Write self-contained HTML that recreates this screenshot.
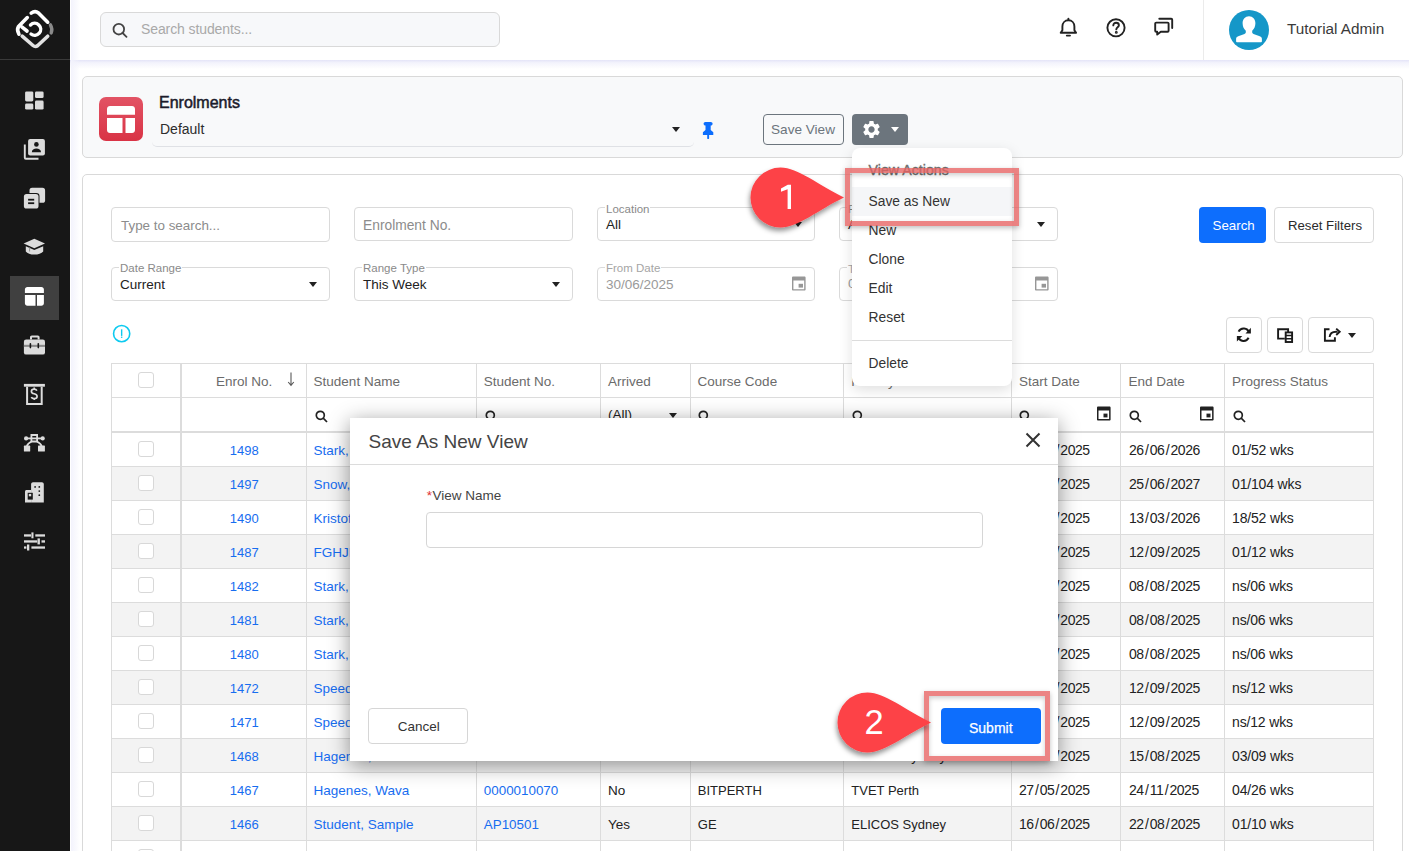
<!DOCTYPE html>
<html><head><meta charset="utf-8">
<style>
*{box-sizing:border-box;margin:0;padding:0}
html,body{width:1409px;height:851px;overflow:hidden;background:#fff;font-family:"Liberation Sans",sans-serif;color:#222}
.a{position:absolute}
.t{position:absolute;white-space:nowrap;line-height:1}
#side{left:0;top:0;width:70px;height:851px;background:#171717}
.ico{position:absolute;fill:#d9d9d9}
#top{left:70px;top:0;width:1339px;height:60px;background:#fff}
.inp{position:absolute;border:1px solid #dadada;border-radius:4px;background:#fff}
.lbl{position:absolute;font-size:11.5px;color:#8a8a8a;background:#fff;padding:0 1px;line-height:12px}
.caret{position:absolute;width:0;height:0;border-left:4px solid transparent;border-right:4px solid transparent;border-top:5px solid #222}
.btn{position:absolute;border-radius:4px;text-align:center;white-space:nowrap}
.hl{position:absolute;background:#dcdcdc}
.cb{position:absolute;width:16px;height:16px;border:1.5px solid #d8d8d8;border-radius:3px;background:#fff}
.cell{position:absolute;white-space:nowrap;font-size:13.5px;line-height:1}
</style></head><body>

<!-- SIDEBAR -->
<div id="side" class="a">
  <svg class="a" style="left:0;top:0" width="70" height="60" viewBox="0 0 70 60" fill="none" stroke-linecap="round" stroke-linejoin="round">
    <path d="M31.2 13.2 Q35 10.2 38.5 13 L47.7 22.2" stroke="#fff" stroke-width="3.6"/>
    <path d="M27.3 17.6 L18.5 26.5 Q16.5 30 18.9 34.1" stroke="#fff" stroke-width="3.6"/>
    <path d="M21.8 26.8 L27 31" stroke="#fff" stroke-width="3.6"/>
    <path d="M30.5 25 A6 6 0 1 1 31 34" stroke="#fff" stroke-width="3.4"/>
    <path d="M22.2 36.2 L33 45.5 Q35.4 47.5 37.8 45.5 L47.7 36.2" stroke="#e2e2e2" stroke-width="3.6"/>
    <path d="M50.4 24.9 Q52.8 29 51.2 32.9" stroke="#8a8a8a" stroke-width="3.4"/>
  </svg>
  <div class="a" style="left:0;top:59px;width:70px;height:1px;background:#3a3a3a"></div>
  <div class="a" style="left:10px;top:276px;width:49px;height:44px;background:#404040"></div>
  <!-- dashboard -->
  <svg class="a" style="left:0;top:80px" width="70" height="100" viewBox="0 80 70 100" fill="#dcdcdc"><rect x="25.1" y="91.4" width="8.2" height="10" rx="1.4"/><rect x="35" y="91.4" width="8.6" height="6.7" rx="1.4"/><rect x="25.1" y="103.5" width="8.2" height="6.1" rx="1.4"/><rect x="35" y="100.5" width="8.6" height="9.1" rx="1.4"/>
  <rect x="28.1" y="139" width="16.8" height="16.4" rx="2"/><path d="M24.8 144.6v13.2c0 .6.4 1 1 1h12.7" fill="none" stroke="#dcdcdc" stroke-width="1.9"/>
  <circle cx="36.4" cy="144.4" r="2.3" fill="#171717"/><path d="M31.8 152.2c0-2.3 2.2-3.6 4.6-3.6s4.6 1.3 4.6 3.6z" fill="#171717"/></svg>
  <!-- copy lines -->
  <svg class="a" style="left:0;top:180px" width="70" height="90" viewBox="0 180 70 90" fill="#dcdcdc">
  <rect x="29.5" y="187.8" width="15.6" height="15" rx="2.6"/>
  <rect x="22.9" y="192.9" width="16.6" height="16.7" rx="3.2" fill="#171717"/>
  <rect x="23.9" y="193.9" width="14.6" height="14.7" rx="2.6"/>
  <rect x="28.1" y="198.8" width="6.1" height="1.8" fill="#171717"/><rect x="28.1" y="202.3" width="6.1" height="1.8" fill="#171717"/>
  <path d="M34.3 238.8L45 243.5 34.3 248.2 23.6 243.5z"/>
  <path d="M25.8 246.2l8.5 3.8 8.9-3.8v5.2c-1.6 2-5 3.2-8.9 3.2s-7-1.2-8.5-3.2z"/>
  <rect x="29" y="247.5" width="1.1" height="4" fill="#9a9a9a"/>
  </svg>
  <!-- web layout (active) -->
  <svg class="a" style="left:0;top:280px" width="70" height="280" viewBox="0 280 70 280">
  <path fill="#fff" d="M27.4 287h14c1.4 0 2.5 1.1 2.5 2.5v3.6H24.9v-3.6c0-1.4 1.1-2.5 2.5-2.5zM24.9 295h10.6v10.8h-8.1c-1.4 0-2.5-1.1-2.5-2.5zM37 295h6.9v8.3c0 1.4-1.1 2.5-2.5 2.5H37z"/>
  <g fill="#dcdcdc">
  <path d="M30 339.6v-2.4c0-1 .8-1.8 1.8-1.8h6c1 0 1.8.8 1.8 1.8v2.4h-2v-2.2h-5.6v2.2z"/>
  <rect x="23.9" y="339.6" width="21.1" height="15" rx="2.2"/>
  </g>
  <rect x="23.9" y="344.8" width="21.1" height="2.1" fill="#8a8a8a"/>
  <rect x="29.6" y="342.9" width="1.6" height="5.5" rx=".8" fill="#171717"/><rect x="37.5" y="342.9" width="1.6" height="5.5" rx=".8" fill="#171717"/>
  <g fill="#dcdcdc">
  <rect x="23.9" y="383.9" width="21" height="2.8"/>
  <path d="M26.1 386.7h16.6v18.2H26.1zM28.1 386.7v16.2h12.6v-16.2z" fill-rule="evenodd"/>
  </g>
  <path d="M36.9 390.6c-.5-.9-1.5-1.5-2.7-1.5-1.6 0-2.8.9-2.8 2.3 0 1.5 1.3 2 2.8 2.4 1.6.4 2.9.9 2.9 2.5 0 1.4-1.3 2.4-2.9 2.4-1.3 0-2.4-.6-2.9-1.6M34.2 387.6v1.5M34.2 398.2v1.8" fill="none" stroke="#dcdcdc" stroke-width="1.7"/>
  <g fill="#dcdcdc">
  <path d="M30.5 434h7.5v8.6h-7.5zM32.3 436v4.6h3.9V436z" fill-rule="evenodd"/>
  <circle cx="26.1" cy="438.4" r="2.1"/><circle cx="42.7" cy="438.4" r="2.1"/>
  <rect x="26.1" y="437.5" width="16.6" height="1.8"/>
  <rect x="23.9" y="445.6" width="6.3" height="6" rx=".6"/><rect x="38" y="445.6" width="6.9" height="6" rx=".6"/>
  </g>
  <path d="M31.5 441.5c-2.6 1.3-4.2 2.8-4.6 4.6M37 441.5c2.6 1.3 4.2 2.8 4.6 4.6" fill="none" stroke="#dcdcdc" stroke-width="1.8"/>
  <g fill="#dcdcdc">
  <path d="M33 482.2h8.9c1 0 1.9.9 1.9 1.9v18.5H31.1V484.1c0-1 .9-1.9 1.9-1.9z"/>
  <path d="M26.5 490.1h4.6v12.5H25V491.6c0-.8.7-1.5 1.5-1.5z"/>
  </g>
  <rect x="27.7" y="492.8" width="5.1" height="6.8" fill="#171717"/><rect x="28.8" y="493.9" width="2.4" height="2.4" fill="#dcdcdc"/>
  <g fill="#171717"><circle cx="35.1" cy="486.9" r=".9"/><circle cx="39.3" cy="486.9" r=".9"/><circle cx="39.3" cy="491.1" r=".9"/><circle cx="39.3" cy="495.2" r=".9"/></g>
  <g fill="#dcdcdc">
  <rect x="24" y="534.3" width="7" height="2.3"/><rect x="31.4" y="532.4" width="2.1" height="5.9"/><rect x="35.3" y="534.3" width="9.7" height="2.3"/>
  <rect x="24" y="540.3" width="13.2" height="2.3"/><rect x="37.5" y="538.4" width="2.4" height="6"/><rect x="41.5" y="540.3" width="3.5" height="2.3"/>
  <rect x="24" y="546.4" width="2.4" height="2.3"/><rect x="27" y="544.5" width="2.3" height="6"/><rect x="31.4" y="546.4" width="13.6" height="2.3"/>
  </g>
  </svg>
</div>

<!-- TOPBAR -->
<div id="top" class="a"></div>
<div class="a" style="left:70px;top:60px;width:1339px;height:9px;background:linear-gradient(#e4e4f8,#f3f3fc 30%,rgba(255,255,255,0))"></div>
<div class="a" style="left:71px;top:0;width:9px;height:851px;background:linear-gradient(90deg,#f3f3fc,rgba(255,255,255,0))"></div>
<div class="a" style="left:100px;top:12px;width:400px;height:35px;background:#f7f8fa;border:1px solid #d9d9d9;border-radius:6px"></div>
<svg class="a" style="left:112px;top:22px" width="16" height="16" viewBox="0 0 16 16" fill="none" stroke="#444" stroke-width="1.8"><circle cx="6.8" cy="7.2" r="5.3"/><path d="M10.6 11 L14.5 14.8" stroke-linecap="round"/></svg>
<div class="t" style="left:141px;top:22px;font-size:14px;color:#a9a9a9;letter-spacing:-0.1px">Search students...</div>

<!-- bell -->
<svg class="a" style="left:1050px;top:10px" width="30" height="30" viewBox="1050 10 30 30" fill="none" stroke="#222" stroke-width="1.9" stroke-linejoin="round" stroke-linecap="round"><path d="M1068.4 20.3c-3.5 0-6 2.7-6 6.2v3.8l-1.7 2.5h15.4l-1.7-2.5v-3.8c0-3.5-2.5-6.2-6-6.2z"/><path d="M1068.4 18.6v1.2M1066.8 35.6h3.2"/></svg>
<!-- help -->
<svg class="a" style="left:1105px;top:17px" width="22" height="22" viewBox="0 0 22 22" fill="none" stroke="#222" stroke-width="1.9"><circle cx="11" cy="10.8" r="8.6"/><path d="M8.3 8.4c0-1.6 1.2-2.7 2.8-2.7 1.6 0 2.8 1.1 2.8 2.5 0 2-2.6 2.2-2.6 4.2" stroke-linecap="round"/><circle cx="11.3" cy="15.4" r="0.5" fill="#222"/></svg>
<!-- chat -->
<svg class="a" style="left:1150px;top:10px" width="30" height="30" viewBox="1150 10 30 30" fill="none" stroke="#222" stroke-width="1.9" stroke-linejoin="round" stroke-linecap="round"><path d="M1156.2 22.6h11.4c.6 0 1 .4 1 1v7.2c0 .6-.4 1-1 1h-6.8l-3.6 2.8v-2.8h-1c-.6 0-1-.4-1-1v-7.2c0-.6.4-1 1-1z"/><path d="M1159.3 18.8h11.9c.6 0 1 .4 1 1v8.2"/></svg>
<div class="a" style="left:1203px;top:0;width:1px;height:60px;background:#ebebeb"></div>
<svg class="a" style="left:1229px;top:10px" width="40" height="40" viewBox="1229 10 40 40"><circle cx="1249" cy="30" r="20" fill="#1597c8"/><path fill="#fff" d="M1249 16.3c3.8 0 6.4 3 6.4 7 0 3.2-1.4 6-3.2 7.4v1.6c0 .8.5 1.3 1.3 1.6l5.6 2c1.5.5 2.8 1.4 2.8 2.8v2.5c0 .6-.5 1.1-1.1 1.1h-23.6c-.6 0-1.1-.5-1.1-1.1v-2.5c0-1.4 1.3-2.3 2.8-2.8l5.6-2c.8-.3 1.3-.8 1.3-1.6v-1.6c-1.8-1.4-3.2-4.2-3.2-7.4 0-4 2.6-7 6.4-7z"/></svg>
<div class="t" style="left:1287px;top:21px;font-size:15.3px;color:#3a3a3a;font-weight:normal">Tutorial Admin</div>
<!-- HEADER CARD -->
<div class="a" style="left:82px;top:76px;width:1321px;height:82px;background:#f8f9fa;border:1px solid #d9d9d9;border-radius:5px"></div>
<div class="a" style="left:99px;top:97px;width:44px;height:44px;border-radius:7px;background:linear-gradient(#e25364,#d93345)"></div>
<svg class="a" style="left:107px;top:106px" width="28" height="27" viewBox="0 0 28 27" fill="#fff"><path d="M3 0h22c1.7 0 3 1.3 3 3v5.8H0V3c0-1.7 1.3-3 3-3zM0 12h15.5v15H3c-1.7 0-3-1.3-3-3V12zm18.5 0H28v12c0 1.7-1.3 3-3 3h-6.5V12z"/></svg>
<div class="t" style="left:159px;top:94.5px;font-size:16px;color:#1b1b2a;-webkit-text-stroke:0.5px #1b1b2a">Enrolments</div>
<div class="a" style="left:152px;top:114px;width:542px;height:33px;border-bottom:1px solid #dfe1e5;border-radius:0 0 5px 5px"></div>
<div class="t" style="left:160px;top:122px;font-size:14px;color:#2d2d2d">Default</div>
<div class="caret" style="left:672px;top:127px"></div>
<svg class="a" style="left:698px;top:118px" width="20" height="24" viewBox="698 118 20 24" fill="#0d6efd"><path d="M705.6 121.9h5.2c1 0 1.8.8 1.8 1.85s-.8 1.85-1.8 1.85h-.1v4.4l2.6 2.2v2.7h-10.4v-2.7l2.6-2.2v-4.4h-.1c-1 0-1.8-.8-1.8-1.85s.8-1.85 1.8-1.85z"/><path d="M707.2 134.8h1.9v3.4c0 .5-.4 .9-.95 .9s-.95-.4-.95-.9z"/></svg>
<div class="btn" style="left:763px;top:114px;width:81px;height:31px;border:1px solid #6c757d;background:transparent"></div>
<div class="t" style="left:771px;top:123px;font-size:13.6px;color:#6c757d">Save View</div>
<div class="btn" style="left:852px;top:114px;width:56px;height:31px;background:#6c757d"></div>
<svg class="a" style="left:861px;top:119px" width="21" height="21" viewBox="0 0 24 24" fill="#fff"><path d="M19.14 12.94c.04-.3.06-.61.06-.94 0-.32-.02-.64-.07-.94l2.03-1.58a.49.49 0 0 0 .12-.61l-1.92-3.32a.488.488 0 0 0-.59-.22l-2.39.96c-.5-.38-1.03-.7-1.62-.94l-.36-2.54a.484.484 0 0 0-.48-.41h-3.84c-.24 0-.43.17-.47.41l-.36 2.54c-.59.24-1.13.57-1.62.94l-2.39-.96c-.22-.08-.47 0-.59.22L2.74 8.87c-.12.21-.08.47.12.61l2.03 1.58c-.05.3-.09.63-.09.94s.02.64.07.94l-2.03 1.58a.49.49 0 0 0-.12.61l1.92 3.32c.12.22.37.29.59.22l2.39-.96c.5.38 1.03.7 1.62.94l.36 2.54c.05.24.24.41.48.41h3.84c.24 0 .44-.17.47-.41l.36-2.54c.59-.24 1.13-.56 1.62-.94l2.39.96c.22.08.47 0 .59-.22l1.92-3.32c.12-.22.07-.47-.12-.61l-2.01-1.58zM12 15.6c-1.98 0-3.6-1.62-3.6-3.6s1.62-3.6 3.6-3.6 3.6 1.62 3.6 3.6-1.62 3.6-3.6 3.6z"/></svg>
<div class="caret" style="left:891px;top:127px;border-top-color:#fff"></div>

<!-- MAIN CARD -->
<div class="a" style="left:82px;top:174px;width:1321px;height:700px;background:#fff;border:1px solid #d9d9d9;border-radius:5px"></div>

<!-- filters row 1 -->
<div class="inp" style="left:111px;top:207px;width:219px;height:35px"></div>
<div class="t" style="left:121px;top:219px;font-size:13.4px;color:#8c8c8c">Type to search...</div>
<div class="inp" style="left:354px;top:207px;width:219px;height:34px"></div>
<div class="t" style="left:363px;top:219px;font-size:13.8px;color:#8c8c8c">Enrolment No.</div>
<div class="inp" style="left:597px;top:207px;width:218px;height:34px"></div>
<div class="lbl" style="left:605px;top:203px">Location</div>
<div class="t" style="left:606px;top:217.5px;font-size:13.5px;color:#222">All</div>
<div class="caret" style="left:794px;top:222px"></div>
<div class="inp" style="left:839px;top:207px;width:219px;height:34px"></div>
<div class="lbl" style="left:847px;top:203px">Faculty</div>
<div class="t" style="left:848px;top:217.5px;font-size:13.5px;color:#222">All</div>
<div class="caret" style="left:1037px;top:222px"></div>
<div class="btn" style="left:1199px;top:207px;width:67px;height:36px;background:#0d6efd"></div>
<div class="t" style="left:1212.6px;top:218.8px;font-size:13.3px;color:#fff">Search</div>
<div class="btn" style="left:1274px;top:207px;width:100px;height:36px;border:1px solid #dadada;background:#fff"></div>
<div class="t" style="left:1288px;top:218.8px;font-size:13.2px;color:#2a2a2a">Reset Filters</div>

<!-- filters row 2 -->
<div class="inp" style="left:111px;top:267px;width:219px;height:34px"></div>
<div class="lbl" style="left:119px;top:262px">Date Range</div>
<div class="t" style="left:120px;top:278px;font-size:13.5px;color:#222">Current</div>
<div class="caret" style="left:309px;top:282px"></div>
<div class="inp" style="left:354px;top:267px;width:219px;height:34px"></div>
<div class="lbl" style="left:362px;top:262px">Range Type</div>
<div class="t" style="left:363px;top:278px;font-size:13.5px;color:#222">This Week</div>
<div class="caret" style="left:552px;top:282px"></div>
<div class="inp" style="left:597px;top:267px;width:218px;height:34px"></div>
<div class="lbl" style="left:605px;top:262px;color:#a5a5a5">From Date</div>
<div class="t" style="left:606px;top:278px;font-size:13.5px;color:#9a9a9a">30/06/2025</div>
<svg class="a" style="left:791.6px;top:276.1px" width="14" height="15" viewBox="0 0 14 15" fill="#979797"><path fill-rule="evenodd" d="M1.2 0.4h11.2c.7 0 1.2.5 1.2 1.2v11.8c0 .7-.5 1.2-1.2 1.2H1.2C.5 14.6 0 14.1 0 13.4V1.6C0 .9.5.4 1.2.4zM1.4 4.5v8.7h10.8V4.5z"/><rect x="6.6" y="7.8" width="4.4" height="3.8"/></svg>
<div class="inp" style="left:839px;top:267px;width:219px;height:34px"></div>
<div class="lbl" style="left:847px;top:263px;color:#a5a5a5">To Date</div>
<div class="t" style="left:848px;top:277.3px;font-size:13.5px;color:#9a9a9a">06/07/2025</div>
<svg class="a" style="left:1034.6px;top:276.1px" width="14" height="15" viewBox="0 0 14 15" fill="#979797"><path fill-rule="evenodd" d="M1.2 0.4h11.2c.7 0 1.2.5 1.2 1.2v11.8c0 .7-.5 1.2-1.2 1.2H1.2C.5 14.6 0 14.1 0 13.4V1.6C0 .9.5.4 1.2.4zM1.4 4.5v8.7h10.8V4.5z"/><rect x="6.6" y="7.8" width="4.4" height="3.8"/></svg>

<!-- info icon -->
<svg class="a" style="left:108px;top:320px" width="28" height="28" viewBox="108 320 28 28" fill="none" stroke="#0dcaf0"><circle cx="121.65" cy="333.65" r="8.1" stroke-width="1.6"/><path d="M121.65 329.3v6.6" stroke-width="1.4"/><path d="M121.65 336.6v1.3" stroke-width="1.4"/></svg>

<!-- toolbar -->
<div class="btn" style="left:1226px;top:317px;width:36px;height:36px;border:1px solid #dadada"></div>
<svg class="a" style="left:1230px;top:322px" width="26" height="26" viewBox="1230 322 26 26" fill="none" stroke="#1a1a1a" stroke-width="2"><path d="M1238.6 331.6a5.6 5.6 0 0 1 10.4 .9"/><path d="M1248.6 337.8a5.6 5.6 0 0 1-10.4-.9"/><path d="M1250.9 327.8v5.6h-5.4z" fill="#1a1a1a" stroke="none"/><path d="M1236.9 341.6v-5.6h5.4z" fill="#1a1a1a" stroke="none"/></svg>
<div class="btn" style="left:1267px;top:317px;width:36px;height:36px;border:1px solid #dadada"></div>
<svg class="a" style="left:1272px;top:322px" width="26" height="26" viewBox="1272 322 26 26" fill="none" stroke="#1a1a1a" stroke-width="1.9"><path d="M1284.8 338.6h-6.7v-9.4h10v3.3"/><rect x="1285.7" y="332.4" width="6.4" height="9.6" fill="#fff"/><path d="M1285.7 335.5h6.4M1285.7 338.7h6.4" stroke-width="1.5"/></svg>
<div class="btn" style="left:1308px;top:317px;width:66px;height:36px;border:1px solid #dadada"></div>
<svg class="a" style="left:1318px;top:322px" width="26" height="26" viewBox="1318 322 26 26" fill="none" stroke="#1a1a1a" stroke-width="1.9"><path d="M1329.5 329.2h-4.6v11.5h10v-3.5"/><path d="M1329.6 337c.3-3.2 2.6-5.2 6.5-5.2h1.5"/><path d="M1336.2 328.6l3.5 3.2-3.5 3.2" stroke-linejoin="miter"/></svg>
<div class="caret" style="left:1348px;top:332.5px"></div>
<div class="a" style="left:111px;top:363px;width:1262px;height:477px;background:#fff"></div>
<div class="a" style="left:111px;top:432px;width:1262px;height:34px;background:#fff"></div>
<div class="a" style="left:111px;top:466px;width:1262px;height:34px;background:#f3f3f3"></div>
<div class="a" style="left:111px;top:500px;width:1262px;height:34px;background:#fff"></div>
<div class="a" style="left:111px;top:534px;width:1262px;height:34px;background:#f3f3f3"></div>
<div class="a" style="left:111px;top:568px;width:1262px;height:34px;background:#fff"></div>
<div class="a" style="left:111px;top:602px;width:1262px;height:34px;background:#f3f3f3"></div>
<div class="a" style="left:111px;top:636px;width:1262px;height:34px;background:#fff"></div>
<div class="a" style="left:111px;top:670px;width:1262px;height:34px;background:#f3f3f3"></div>
<div class="a" style="left:111px;top:704px;width:1262px;height:34px;background:#fff"></div>
<div class="a" style="left:111px;top:738px;width:1262px;height:34px;background:#f3f3f3"></div>
<div class="a" style="left:111px;top:772px;width:1262px;height:34px;background:#fff"></div>
<div class="a" style="left:111px;top:806px;width:1262px;height:34px;background:#f3f3f3"></div>
<div class="a" style="left:111px;top:840px;width:1262px;height:11px;background:#fff"></div>
<div class="hl" style="left:111px;top:363px;width:1263px;height:1px"></div>
<div class="hl" style="left:111px;top:397px;width:1263px;height:1px"></div>
<div class="hl" style="left:111px;top:466px;width:1263px;height:1px"></div>
<div class="hl" style="left:111px;top:500px;width:1263px;height:1px"></div>
<div class="hl" style="left:111px;top:534px;width:1263px;height:1px"></div>
<div class="hl" style="left:111px;top:568px;width:1263px;height:1px"></div>
<div class="hl" style="left:111px;top:602px;width:1263px;height:1px"></div>
<div class="hl" style="left:111px;top:636px;width:1263px;height:1px"></div>
<div class="hl" style="left:111px;top:670px;width:1263px;height:1px"></div>
<div class="hl" style="left:111px;top:704px;width:1263px;height:1px"></div>
<div class="hl" style="left:111px;top:738px;width:1263px;height:1px"></div>
<div class="hl" style="left:111px;top:772px;width:1263px;height:1px"></div>
<div class="hl" style="left:111px;top:806px;width:1263px;height:1px"></div>
<div class="hl" style="left:111px;top:840px;width:1263px;height:1px"></div>
<div class="hl" style="left:111px;top:431px;width:1263px;height:2px"></div>
<div class="hl" style="left:111px;top:363px;width:1px;height:488px"></div>
<div class="hl" style="left:306px;top:363px;width:1px;height:488px"></div>
<div class="hl" style="left:476px;top:363px;width:1px;height:488px"></div>
<div class="hl" style="left:600px;top:363px;width:1px;height:488px"></div>
<div class="hl" style="left:690px;top:363px;width:1px;height:488px"></div>
<div class="hl" style="left:843px;top:363px;width:1px;height:488px"></div>
<div class="hl" style="left:1011px;top:363px;width:1px;height:488px"></div>
<div class="hl" style="left:1120px;top:363px;width:1px;height:488px"></div>
<div class="hl" style="left:1224px;top:363px;width:1px;height:488px"></div>
<div class="hl" style="left:1373px;top:363px;width:1px;height:488px"></div>
<div class="hl" style="left:180px;top:363px;width:2px;height:488px"></div>
<div class="cell" style="left:313.6px;top:374.6px;color:#6b6b6b">Student Name</div>
<div class="cell" style="left:483.8px;top:374.6px;color:#6b6b6b">Student No.</div>
<div class="cell" style="left:608.0px;top:374.6px;color:#6b6b6b">Arrived</div>
<div class="cell" style="left:697.6px;top:374.6px;color:#6b6b6b">Course Code</div>
<div class="cell" style="left:851.3px;top:374.6px;color:#6b6b6b">Faculty</div>
<div class="cell" style="left:1018.9px;top:374.6px;color:#6b6b6b">Start Date</div>
<div class="cell" style="left:1128.5px;top:374.6px;color:#6b6b6b">End Date</div>
<div class="cell" style="left:1232.0px;top:374.6px;color:#6b6b6b">Progress Status</div>
<div class="cell" style="left:216px;top:374.6px;color:#6b6b6b">Enrol No.</div>
<svg class="a" style="left:286px;top:371px" width="10" height="16" viewBox="0 0 10 16" fill="none" stroke="#5a5a5a" stroke-width="1.1"><path d="M5 1.5v13M2.2 11l2.8 3.3 2.8-3.3"/></svg>
<div class="cb" style="left:138px;top:372px"></div>
<svg class="a" style="left:315px;top:410px" width="13" height="13" viewBox="0 0 13 13" fill="none" stroke="#222" stroke-width="1.7"><circle cx="5.3" cy="5.3" r="4"/><path d="M8.2 8.2l3.8 3.8"/></svg>
<svg class="a" style="left:485px;top:410px" width="13" height="13" viewBox="0 0 13 13" fill="none" stroke="#222" stroke-width="1.7"><circle cx="5.3" cy="5.3" r="4"/><path d="M8.2 8.2l3.8 3.8"/></svg>
<svg class="a" style="left:698px;top:410px" width="13" height="13" viewBox="0 0 13 13" fill="none" stroke="#222" stroke-width="1.7"><circle cx="5.3" cy="5.3" r="4"/><path d="M8.2 8.2l3.8 3.8"/></svg>
<svg class="a" style="left:852px;top:410px" width="13" height="13" viewBox="0 0 13 13" fill="none" stroke="#222" stroke-width="1.7"><circle cx="5.3" cy="5.3" r="4"/><path d="M8.2 8.2l3.8 3.8"/></svg>
<svg class="a" style="left:1019px;top:410px" width="13" height="13" viewBox="0 0 13 13" fill="none" stroke="#222" stroke-width="1.7"><circle cx="5.3" cy="5.3" r="4"/><path d="M8.2 8.2l3.8 3.8"/></svg>
<svg class="a" style="left:1129px;top:410px" width="13" height="13" viewBox="0 0 13 13" fill="none" stroke="#222" stroke-width="1.7"><circle cx="5.3" cy="5.3" r="4"/><path d="M8.2 8.2l3.8 3.8"/></svg>
<svg class="a" style="left:1233px;top:410px" width="13" height="13" viewBox="0 0 13 13" fill="none" stroke="#222" stroke-width="1.7"><circle cx="5.3" cy="5.3" r="4"/><path d="M8.2 8.2l3.8 3.8"/></svg>
<svg class="a" style="left:1096.6px;top:406.4px" width="14" height="15" viewBox="0 0 14 15" fill="#222"><path fill-rule="evenodd" d="M1.2 0.4h11.2c.7 0 1.2.5 1.2 1.2v11.8c0 .7-.5 1.2-1.2 1.2H1.2C.5 14.6 0 14.1 0 13.4V1.6C0 .9.5.4 1.2.4zM1.5 4.5v8.6h10.6V4.5z"/><rect x="6.5" y="7.6" width="4" height="3.8"/></svg>
<svg class="a" style="left:1200.4px;top:406.4px" width="14" height="15" viewBox="0 0 14 15" fill="#222"><path fill-rule="evenodd" d="M1.2 0.4h11.2c.7 0 1.2.5 1.2 1.2v11.8c0 .7-.5 1.2-1.2 1.2H1.2C.5 14.6 0 14.1 0 13.4V1.6C0 .9.5.4 1.2.4zM1.5 4.5v8.6h10.6V4.5z"/><rect x="6.5" y="7.6" width="4" height="3.8"/></svg>
<div class="cell" style="left:608px;top:408px;color:#222">(All)</div>
<div class="caret" style="left:669px;top:412.5px"></div>
<div class="cb" style="left:138px;top:441px"></div>
<div class="cell" style="left:229.7px;top:444.0px;font-size:13.0px;color:#176df0">1498</div>
<div class="cell" style="left:313.6px;top:443.6px;font-size:13.5px;color:#176df0">Stark, Tony</div>
<div class="cell" style="left:483.8px;top:443.7px;font-size:13.4px;color:#176df0">0000010101</div>
<div class="cell" style="left:608.0px;top:443.6px;font-size:13.5px;color:#222">Yes</div>
<div class="cell" style="left:697.8px;top:444.0px;font-size:13.0px;color:#222">BITPERTH</div>
<div class="cell" style="left:851.3px;top:444.0px;font-size:13.0px;color:#222">TVET Perth</div>
<div class="cell" style="left:1018.9px;top:443.1px;font-size:14.0px;color:#222;letter-spacing:-0.45px">30<span style="padding:0 1.3px">/</span>06<span style="padding:0 1.3px">/</span>2025</div>
<div class="cell" style="left:1129.0px;top:443.1px;font-size:14.0px;color:#222;letter-spacing:-0.45px">26<span style="padding:0 1.3px">/</span>06<span style="padding:0 1.3px">/</span>2026</div>
<div class="cell" style="left:1232.0px;top:443.1px;font-size:14.0px;color:#222;letter-spacing:-0.16px">01/52 wks</div>
<div class="cb" style="left:138px;top:475px"></div>
<div class="cell" style="left:229.7px;top:478.0px;font-size:13.0px;color:#176df0">1497</div>
<div class="cell" style="left:313.6px;top:477.6px;font-size:13.5px;color:#176df0">Snow, Jon</div>
<div class="cell" style="left:483.8px;top:477.7px;font-size:13.4px;color:#176df0">0000010099</div>
<div class="cell" style="left:608.0px;top:477.6px;font-size:13.5px;color:#222">Yes</div>
<div class="cell" style="left:697.8px;top:478.0px;font-size:13.0px;color:#222">BBUS</div>
<div class="cell" style="left:851.3px;top:478.0px;font-size:13.0px;color:#222">Higher Ed Sydney</div>
<div class="cell" style="left:1018.9px;top:477.1px;font-size:14.0px;color:#222;letter-spacing:-0.45px">30<span style="padding:0 1.3px">/</span>06<span style="padding:0 1.3px">/</span>2025</div>
<div class="cell" style="left:1129.0px;top:477.1px;font-size:14.0px;color:#222;letter-spacing:-0.45px">25<span style="padding:0 1.3px">/</span>06<span style="padding:0 1.3px">/</span>2027</div>
<div class="cell" style="left:1232.0px;top:477.1px;font-size:14.0px;color:#222;letter-spacing:-0.16px">01/104 wks</div>
<div class="cb" style="left:138px;top:509px"></div>
<div class="cell" style="left:229.7px;top:512.0px;font-size:13.0px;color:#176df0">1490</div>
<div class="cell" style="left:313.6px;top:511.6px;font-size:13.5px;color:#176df0">Kristoff, Anna</div>
<div class="cell" style="left:483.8px;top:511.7px;font-size:13.4px;color:#176df0">0000010095</div>
<div class="cell" style="left:608.0px;top:511.6px;font-size:13.5px;color:#222">No</div>
<div class="cell" style="left:697.8px;top:512.0px;font-size:13.0px;color:#222">BITPERTH</div>
<div class="cell" style="left:851.3px;top:512.0px;font-size:13.0px;color:#222">TVET Perth</div>
<div class="cell" style="left:1018.9px;top:511.1px;font-size:14.0px;color:#222;letter-spacing:-0.45px">16<span style="padding:0 1.3px">/</span>06<span style="padding:0 1.3px">/</span>2025</div>
<div class="cell" style="left:1129.0px;top:511.1px;font-size:14.0px;color:#222;letter-spacing:-0.45px">13<span style="padding:0 1.3px">/</span>03<span style="padding:0 1.3px">/</span>2026</div>
<div class="cell" style="left:1232.0px;top:511.1px;font-size:14.0px;color:#222;letter-spacing:-0.16px">18/52 wks</div>
<div class="cb" style="left:138px;top:543px"></div>
<div class="cell" style="left:229.7px;top:546.0px;font-size:13.0px;color:#176df0">1487</div>
<div class="cell" style="left:313.6px;top:545.6px;font-size:13.5px;color:#176df0">FGHJK, Sample</div>
<div class="cell" style="left:483.8px;top:545.7px;font-size:13.4px;color:#176df0">0000010090</div>
<div class="cell" style="left:608.0px;top:545.6px;font-size:13.5px;color:#222">Yes</div>
<div class="cell" style="left:697.8px;top:546.0px;font-size:13.0px;color:#222">GE</div>
<div class="cell" style="left:851.3px;top:546.0px;font-size:13.0px;color:#222">ELICOS Sydney</div>
<div class="cell" style="left:1018.9px;top:545.1px;font-size:14.0px;color:#222;letter-spacing:-0.45px">30<span style="padding:0 1.3px">/</span>06<span style="padding:0 1.3px">/</span>2025</div>
<div class="cell" style="left:1129.0px;top:545.1px;font-size:14.0px;color:#222;letter-spacing:-0.45px">12<span style="padding:0 1.3px">/</span>09<span style="padding:0 1.3px">/</span>2025</div>
<div class="cell" style="left:1232.0px;top:545.1px;font-size:14.0px;color:#222;letter-spacing:-0.16px">01/12 wks</div>
<div class="cb" style="left:138px;top:577px"></div>
<div class="cell" style="left:229.7px;top:580.0px;font-size:13.0px;color:#176df0">1482</div>
<div class="cell" style="left:313.6px;top:579.6px;font-size:13.5px;color:#176df0">Stark, Arya</div>
<div class="cell" style="left:483.8px;top:579.7px;font-size:13.4px;color:#176df0">0000010088</div>
<div class="cell" style="left:608.0px;top:579.6px;font-size:13.5px;color:#222">No</div>
<div class="cell" style="left:697.8px;top:580.0px;font-size:13.0px;color:#222">GE</div>
<div class="cell" style="left:851.3px;top:580.0px;font-size:13.0px;color:#222">ELICOS Sydney</div>
<div class="cell" style="left:1018.9px;top:579.1px;font-size:14.0px;color:#222;letter-spacing:-0.45px">07<span style="padding:0 1.3px">/</span>07<span style="padding:0 1.3px">/</span>2025</div>
<div class="cell" style="left:1129.0px;top:579.1px;font-size:14.0px;color:#222;letter-spacing:-0.45px">08<span style="padding:0 1.3px">/</span>08<span style="padding:0 1.3px">/</span>2025</div>
<div class="cell" style="left:1232.0px;top:579.1px;font-size:14.0px;color:#222;letter-spacing:-0.16px">ns/06 wks</div>
<div class="cb" style="left:138px;top:611px"></div>
<div class="cell" style="left:229.7px;top:614.0px;font-size:13.0px;color:#176df0">1481</div>
<div class="cell" style="left:313.6px;top:613.6px;font-size:13.5px;color:#176df0">Stark, Sansa</div>
<div class="cell" style="left:483.8px;top:613.7px;font-size:13.4px;color:#176df0">0000010087</div>
<div class="cell" style="left:608.0px;top:613.6px;font-size:13.5px;color:#222">No</div>
<div class="cell" style="left:697.8px;top:614.0px;font-size:13.0px;color:#222">GE</div>
<div class="cell" style="left:851.3px;top:614.0px;font-size:13.0px;color:#222">ELICOS Sydney</div>
<div class="cell" style="left:1018.9px;top:613.1px;font-size:14.0px;color:#222;letter-spacing:-0.45px">07<span style="padding:0 1.3px">/</span>07<span style="padding:0 1.3px">/</span>2025</div>
<div class="cell" style="left:1129.0px;top:613.1px;font-size:14.0px;color:#222;letter-spacing:-0.45px">08<span style="padding:0 1.3px">/</span>08<span style="padding:0 1.3px">/</span>2025</div>
<div class="cell" style="left:1232.0px;top:613.1px;font-size:14.0px;color:#222;letter-spacing:-0.16px">ns/06 wks</div>
<div class="cb" style="left:138px;top:645px"></div>
<div class="cell" style="left:229.7px;top:648.0px;font-size:13.0px;color:#176df0">1480</div>
<div class="cell" style="left:313.6px;top:647.6px;font-size:13.5px;color:#176df0">Stark, Bran</div>
<div class="cell" style="left:483.8px;top:647.7px;font-size:13.4px;color:#176df0">0000010086</div>
<div class="cell" style="left:608.0px;top:647.6px;font-size:13.5px;color:#222">No</div>
<div class="cell" style="left:697.8px;top:648.0px;font-size:13.0px;color:#222">GE</div>
<div class="cell" style="left:851.3px;top:648.0px;font-size:13.0px;color:#222">ELICOS Sydney</div>
<div class="cell" style="left:1018.9px;top:647.1px;font-size:14.0px;color:#222;letter-spacing:-0.45px">07<span style="padding:0 1.3px">/</span>07<span style="padding:0 1.3px">/</span>2025</div>
<div class="cell" style="left:1129.0px;top:647.1px;font-size:14.0px;color:#222;letter-spacing:-0.45px">08<span style="padding:0 1.3px">/</span>08<span style="padding:0 1.3px">/</span>2025</div>
<div class="cell" style="left:1232.0px;top:647.1px;font-size:14.0px;color:#222;letter-spacing:-0.16px">ns/06 wks</div>
<div class="cb" style="left:138px;top:679px"></div>
<div class="cell" style="left:229.7px;top:682.0px;font-size:13.0px;color:#176df0">1472</div>
<div class="cell" style="left:313.6px;top:681.6px;font-size:13.5px;color:#176df0">Speed, Jane</div>
<div class="cell" style="left:483.8px;top:681.7px;font-size:13.4px;color:#176df0">0000010080</div>
<div class="cell" style="left:608.0px;top:681.6px;font-size:13.5px;color:#222">No</div>
<div class="cell" style="left:697.8px;top:682.0px;font-size:13.0px;color:#222">GE</div>
<div class="cell" style="left:851.3px;top:682.0px;font-size:13.0px;color:#222">ELICOS Sydney</div>
<div class="cell" style="left:1018.9px;top:681.1px;font-size:14.0px;color:#222;letter-spacing:-0.45px">07<span style="padding:0 1.3px">/</span>07<span style="padding:0 1.3px">/</span>2025</div>
<div class="cell" style="left:1129.0px;top:681.1px;font-size:14.0px;color:#222;letter-spacing:-0.45px">12<span style="padding:0 1.3px">/</span>09<span style="padding:0 1.3px">/</span>2025</div>
<div class="cell" style="left:1232.0px;top:681.1px;font-size:14.0px;color:#222;letter-spacing:-0.16px">ns/12 wks</div>
<div class="cb" style="left:138px;top:713px"></div>
<div class="cell" style="left:229.7px;top:716.0px;font-size:13.0px;color:#176df0">1471</div>
<div class="cell" style="left:313.6px;top:715.6px;font-size:13.5px;color:#176df0">Speed, John</div>
<div class="cell" style="left:483.8px;top:715.7px;font-size:13.4px;color:#176df0">0000010079</div>
<div class="cell" style="left:608.0px;top:715.6px;font-size:13.5px;color:#222">No</div>
<div class="cell" style="left:697.8px;top:716.0px;font-size:13.0px;color:#222">GE</div>
<div class="cell" style="left:851.3px;top:716.0px;font-size:13.0px;color:#222">ELICOS Sydney</div>
<div class="cell" style="left:1018.9px;top:715.1px;font-size:14.0px;color:#222;letter-spacing:-0.45px">07<span style="padding:0 1.3px">/</span>07<span style="padding:0 1.3px">/</span>2025</div>
<div class="cell" style="left:1129.0px;top:715.1px;font-size:14.0px;color:#222;letter-spacing:-0.45px">12<span style="padding:0 1.3px">/</span>09<span style="padding:0 1.3px">/</span>2025</div>
<div class="cell" style="left:1232.0px;top:715.1px;font-size:14.0px;color:#222;letter-spacing:-0.16px">ns/12 wks</div>
<div class="cb" style="left:138px;top:747px"></div>
<div class="cell" style="left:229.7px;top:750.0px;font-size:13.0px;color:#176df0">1468</div>
<div class="cell" style="left:313.6px;top:749.6px;font-size:13.5px;color:#176df0">Hagenes, Wava</div>
<div class="cell" style="left:483.8px;top:749.7px;font-size:13.4px;color:#176df0">0000010070</div>
<div class="cell" style="left:608.0px;top:749.6px;font-size:13.5px;color:#222">Yes</div>
<div class="cell" style="left:697.8px;top:750.0px;font-size:13.0px;color:#222">GE</div>
<div class="cell" style="left:851.3px;top:750.0px;font-size:13.0px;color:#222">ELICOS Sydney</div>
<div class="cell" style="left:1018.9px;top:749.1px;font-size:14.0px;color:#222;letter-spacing:-0.45px">16<span style="padding:0 1.3px">/</span>06<span style="padding:0 1.3px">/</span>2025</div>
<div class="cell" style="left:1129.0px;top:749.1px;font-size:14.0px;color:#222;letter-spacing:-0.45px">15<span style="padding:0 1.3px">/</span>08<span style="padding:0 1.3px">/</span>2025</div>
<div class="cell" style="left:1232.0px;top:749.1px;font-size:14.0px;color:#222;letter-spacing:-0.16px">03/09 wks</div>
<div class="cb" style="left:138px;top:781px"></div>
<div class="cell" style="left:229.7px;top:784.0px;font-size:13.0px;color:#176df0">1467</div>
<div class="cell" style="left:313.6px;top:783.6px;font-size:13.5px;color:#176df0">Hagenes, Wava</div>
<div class="cell" style="left:483.8px;top:783.7px;font-size:13.4px;color:#176df0">0000010070</div>
<div class="cell" style="left:608.0px;top:783.6px;font-size:13.5px;color:#222">No</div>
<div class="cell" style="left:697.8px;top:784.0px;font-size:13.0px;color:#222">BITPERTH</div>
<div class="cell" style="left:851.3px;top:784.0px;font-size:13.0px;color:#222">TVET Perth</div>
<div class="cell" style="left:1018.9px;top:783.1px;font-size:14.0px;color:#222;letter-spacing:-0.45px">27<span style="padding:0 1.3px">/</span>05<span style="padding:0 1.3px">/</span>2025</div>
<div class="cell" style="left:1129.0px;top:783.1px;font-size:14.0px;color:#222;letter-spacing:-0.45px">24<span style="padding:0 1.3px">/</span>11<span style="padding:0 1.3px">/</span>2025</div>
<div class="cell" style="left:1232.0px;top:783.1px;font-size:14.0px;color:#222;letter-spacing:-0.16px">04/26 wks</div>
<div class="cb" style="left:138px;top:815px"></div>
<div class="cell" style="left:229.7px;top:818.0px;font-size:13.0px;color:#176df0">1466</div>
<div class="cell" style="left:313.6px;top:817.6px;font-size:13.5px;color:#176df0">Student, Sample</div>
<div class="cell" style="left:483.8px;top:817.7px;font-size:13.4px;color:#176df0">AP10501</div>
<div class="cell" style="left:608.0px;top:817.6px;font-size:13.5px;color:#222">Yes</div>
<div class="cell" style="left:697.8px;top:818.0px;font-size:13.0px;color:#222">GE</div>
<div class="cell" style="left:851.3px;top:818.0px;font-size:13.0px;color:#222">ELICOS Sydney</div>
<div class="cell" style="left:1018.9px;top:817.1px;font-size:14.0px;color:#222;letter-spacing:-0.45px">16<span style="padding:0 1.3px">/</span>06<span style="padding:0 1.3px">/</span>2025</div>
<div class="cell" style="left:1129.0px;top:817.1px;font-size:14.0px;color:#222;letter-spacing:-0.45px">22<span style="padding:0 1.3px">/</span>08<span style="padding:0 1.3px">/</span>2025</div>
<div class="cell" style="left:1232.0px;top:817.1px;font-size:14.0px;color:#222;letter-spacing:-0.16px">01/10 wks</div>
<div class="cb" style="left:138px;top:849px"></div><!-- DROPDOWN -->
<div class="a" style="left:852px;top:148px;width:160px;height:238px;background:#fff;border-radius:8px;box-shadow:0 4px 14px rgba(0,0,0,0.13)"></div>
<div class="t" style="left:868.6px;top:163.2px;font-size:14.2px;color:#6e6e6e;-webkit-text-stroke:0.35px #6e6e6e">View Actions</div>
<div class="a" style="left:852px;top:187px;width:160px;height:29px;background:#f5f6f8"></div>
<div class="t" style="left:868.6px;top:195.3px;font-size:13.8px;color:#333">Save as New</div>
<div class="t" style="left:868.6px;top:223.6px;font-size:13.8px;color:#333">New</div>
<div class="t" style="left:868.6px;top:253px;font-size:13.8px;color:#333">Clone</div>
<div class="t" style="left:868.6px;top:282px;font-size:13.8px;color:#333">Edit</div>
<div class="t" style="left:868.6px;top:311px;font-size:13.8px;color:#333">Reset</div>
<div class="a" style="left:852px;top:340px;width:160px;height:1px;background:#dcdcdc"></div>
<div class="t" style="left:868.6px;top:357px;font-size:13.8px;color:#333">Delete</div>

<!-- highlight 1 -->
<div class="a" style="left:845px;top:168px;width:174px;height:58px;border:5px solid rgba(231,98,98,0.78);box-shadow:0 2px 5px rgba(0,0,0,0.25), inset 0 2px 5px rgba(0,0,0,0.2)"></div>
<!-- bubble 1 -->
<svg class="a" style="left:740px;top:160px;overflow:visible" width="110" height="80" viewBox="0 0 110 80"><defs><filter id="sh" x="-30%" y="-30%" width="160%" height="160%"><feDropShadow dx="-1" dy="3.5" stdDeviation="2.6" flood-color="#000" flood-opacity="0.42"/></filter></defs>
<path d="M40.5 7.6 C58 7.6 78 25 104 37.6 C78 50 58 67.6 40.5 67.6 A30 30 0 0 1 40.5 7.6 Z" fill="#fd4247" filter="url(#sh)"/>
<path fill="#fff" d="M51 24.8V48.9H47.6V29.3L41 31.7V28.5L47.8 24.8Z"/></svg>

<!-- MODAL -->
<div class="a" style="left:350px;top:418px;width:708px;height:343px;background:#fff;box-shadow:0 4px 20px rgba(0,0,0,0.42)"></div>
<div class="a" style="left:350px;top:464px;width:708px;height:1px;background:#dcdcdc"></div>
<div class="t" style="left:368.6px;top:431.8px;font-size:19px;color:#444">Save As New View</div>
<svg class="a" style="left:1025px;top:432px" width="16" height="16" viewBox="0 0 16 16" stroke="#333" stroke-width="2"><path d="M1.5 1.5l13 13M14.5 1.5l-13 13"/></svg>
<div class="t" style="left:426.7px;top:488.6px;font-size:13.5px;color:#e03030">*</div>
<div class="t" style="left:432.6px;top:488.6px;font-size:13.5px;color:#444">View Name</div>
<div class="inp" style="left:426px;top:512px;width:557px;height:36px;border-color:#d6d6d6"></div>
<div class="btn" style="left:368px;top:708px;width:100px;height:36px;border:1px solid #d6d6d6;background:#fff"></div>
<div class="t" style="left:397.7px;top:719.6px;font-size:13.5px;color:#333">Cancel</div>
<div class="btn" style="left:941px;top:708px;width:100px;height:36px;background:#0d6efd"></div>
<div class="t" style="left:969px;top:720.5px;font-size:14px;color:#fff;-webkit-text-stroke:0.25px #fff">Submit</div>

<!-- highlight 2 -->
<div class="a" style="left:924px;top:691px;width:126px;height:70px;border:5px solid rgba(231,98,98,0.78);box-shadow:0 2px 5px rgba(0,0,0,0.25), inset 0 2px 5px rgba(0,0,0,0.2)"></div>
<!-- bubble 2 -->
<svg class="a" style="left:827px;top:685px;overflow:visible" width="110" height="80" viewBox="0 0 110 80"><defs><filter id="sh2" x="-30%" y="-30%" width="160%" height="160%"><feDropShadow dx="-1" dy="3.5" stdDeviation="2.6" flood-color="#000" flood-opacity="0.42"/></filter></defs>
<path d="M40.5 7.5 C58 7.5 78 25 104 37.5 C78 50 58 67.5 40.5 67.5 A30 30 0 0 1 40.5 7.5 Z" fill="#fd4247" filter="url(#sh2)"/>
<text x="47.2" y="49.2" fill="#fff" font-family="Liberation Sans" font-size="34.5" text-anchor="middle">2</text></svg>
</body></html>
